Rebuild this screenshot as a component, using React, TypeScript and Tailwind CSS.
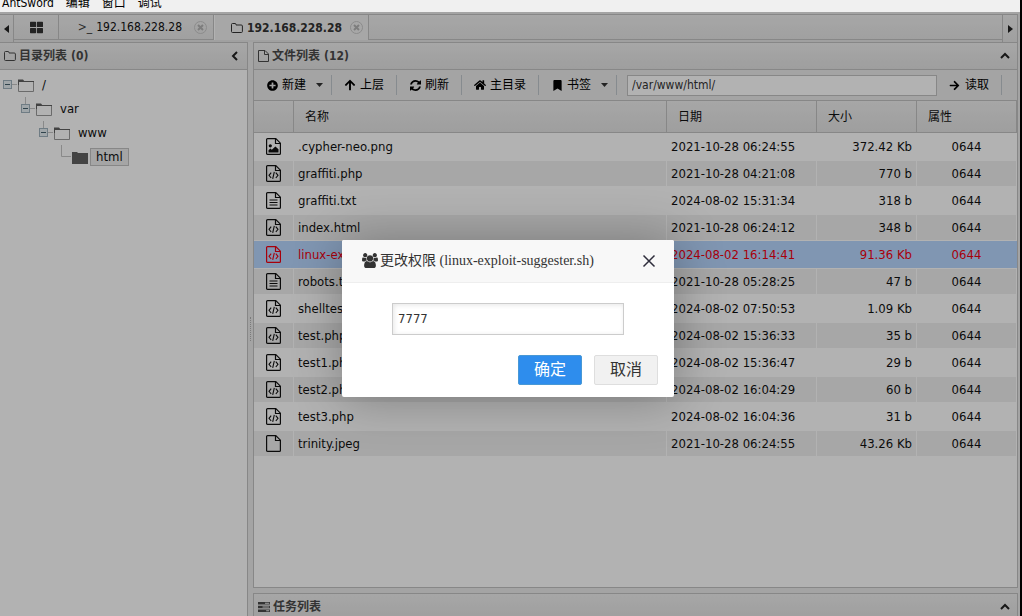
import React, { useState } from 'react';
import { FaArrowRight, FaArrowUp, FaBookmark, FaHome, FaPlusCircle, FaThLarge } from 'react-icons/fa';

type FileKind = 'image' | 'code' | 'text' | 'plain';

interface FileEntry {
  name: string;
  kind: FileKind;
  date: string;
  size: string;
  mode: string;
}

const files: FileEntry[] = [
  { name: '.cypher-neo.png', kind: 'image', date: '2021-10-28 06:24:55', size: '372.42 Kb', mode: '0644' },
  { name: 'graffiti.php', kind: 'code', date: '2021-10-28 04:21:08', size: '770 b', mode: '0644' },
  { name: 'graffiti.txt', kind: 'text', date: '2024-08-02 15:31:34', size: '318 b', mode: '0644' },
  { name: 'index.html', kind: 'code', date: '2021-10-28 06:24:12', size: '348 b', mode: '0644' },
  { name: 'linux-exploit-suggester.sh', kind: 'code', date: '2024-08-02 16:14:41', size: '91.36 Kb', mode: '0644' },
  { name: 'robots.txt', kind: 'text', date: '2021-10-28 05:28:25', size: '47 b', mode: '0644' },
  { name: 'shelltest.php', kind: 'code', date: '2024-08-02 07:50:53', size: '1.09 Kb', mode: '0644' },
  { name: 'test.php', kind: 'code', date: '2024-08-02 15:36:33', size: '35 b', mode: '0644' },
  { name: 'test1.php', kind: 'code', date: '2024-08-02 15:36:47', size: '29 b', mode: '0644' },
  { name: 'test2.php', kind: 'code', date: '2024-08-02 16:04:29', size: '60 b', mode: '0644' },
  { name: 'test3.php', kind: 'code', date: '2024-08-02 16:04:36', size: '31 b', mode: '0644' },
  { name: 'trinity.jpeg', kind: 'plain', date: '2021-10-28 06:24:55', size: '43.26 Kb', mode: '0644' },
];

const tree = [
  { name: '/', indent: 'pl-0' },
  { name: 'var', indent: 'pl-[18px]' },
  { name: 'www', indent: 'pl-[36px]' },
  { name: 'html', indent: 'pl-[54px]' },
];

const FileIcon: React.FC<{ kind: FileKind }> = ({ kind }) => (
  <svg width="15" height="17" viewBox="0 0 15 17" fill="none" stroke="currentColor" strokeWidth="1.2" className="mx-auto block">
    <path d="M1.6 .6H9.8L14.4 5.2V15.4Q14.4 16.4 13.4 16.4H1.6Q.6 16.4 .6 15.4V1.6Q.6 .6 1.6 .6Z" />
    <path d="M9.5 .9V5.5H14.1" />
    {kind === 'code' && <path d="M5.2 7.6L3 10.3L5.2 13M9.8 7.6L12 10.3L9.8 13M8.3 6.8L6.7 13.8" strokeWidth="1.1" />}
    {kind === 'text' && <path d="M3.5 8H11.5M3.5 10.5H11.5M3.5 13H11.5" strokeWidth="1.2" />}
    {kind === 'image' && (
      <g fill="currentColor" stroke="none">
        <circle cx="4.3" cy="7.8" r="1.6" />
        <path d="M2.5 14.5V12.3L4.4 10.6L5.8 11.8L9.4 8.4L12.5 11.3V14.5Z" />
      </g>
    )}
  </svg>
);

const UsersIcon: React.FC = () => (
  <svg width="16" height="15" viewBox="0 0 1920 1792" fill="currentColor" className="shrink-0">
    <path d="M593 896q-162 5-265 128H194q-82 0-138-40.5T0 865q0-353 124-353 6 0 43.5 21t97.5 42.5T384 597q67 0 133-23-5 37-5 66 0 139 81 256zm1071 637q0 120-73 189.5t-194 69.5H523q-121 0-194-69.5T256 1533q0-53 3.5-103.5t14-109T300 1212t43-97.5 62-81 85.5-53.5T602 960q10 0 43 21.5t73 48 107 48 135 21.5 135-21.5 107-48 73-48 43-21.5q61 0 111.5 20t85.5 53.5 62 81 43 97.5 26.5 108.5 14 109 3.5 103.5zM640 256q0 106-75 181t-181 75-181-75-75-181 75-181T384 0t181 75 75 181zm704 384q0 159-112.5 271.5T960 1024 688.5 911.5 576 640t112.5-271.5T960 256t271.5 112.5T1344 640zm576 225q0 78-56 118.5t-138 40.5h-134q-103-123-265-128 81-117 81-256 0-29-5-66 66 23 133 23 59 0 119-21.5t97.5-42.5 43.5-21q124 0 124 353zm-128-609q0 106-75 181t-181 75-181-75-75-181 75-181 181-75 181 75 75 181z" />
  </svg>
);

const RefreshIcon: React.FC = () => (
  <svg width="11" height="11" viewBox="0 0 1536 1536" fill="currentColor">
    <path d="M1511 928q0 5-1 7-64 268-268 434.5T764 1536q-146 0-282.5-55T238 1324l-129 129q-19 19-45 19t-45-19-19-45V960q0-26 19-45t45-19h448q26 0 45 19t19 45-19 45l-137 137q71 66 161 102t187 36q134 0 250-65t186-179q11-17 53-117 8-23 30-23h192q13 0 22.5 9.5t9.5 22.5zm25-800v448q0 26-19 45t-45 19h-448q-26 0-45-19t-19-45 19-45l138-138Q969 256 768 256q-134 0-250 65T332 500q-11 17-53 117-8 23-30 23H50q-13 0-22.5-9.5T18 608v-7q65-268 270-434.5T768 0q146 0 284 55.5T1297 212l130-129q19-19 45-19t45 19 19 45z" />
  </svg>
);

const TasksIcon: React.FC = () => (
  <svg width="12" height="10" viewBox="0 0 12 10" fill="currentColor" className="shrink-0">
    <path d="M0 0H12V2.6H0ZM0 3.7H12V6.3H0ZM0 7.4H12V10H0Z" />
    <path d="M7 .8H11.2V1.8H7ZM4.5 4.5H11.2V5.5H4.5ZM8.2 8.2H11.2V9.2H8.2Z" fill="#e9e9e9" />
  </svg>
);

const OutlineFolder: React.FC = () => (
  <svg width="12" height="10" viewBox="0 0 12 10" fill="none" stroke="currentColor" className="shrink-0">
    <path d="M.5 1.5Q.5 .5 1.5 .5H4Q5 .5 5 1.5V2H10.2Q11.4 2 11.4 3V8.5Q11.4 9.5 10.4 9.5H1.5Q.5 9.5 .5 8.5Z" />
  </svg>
);

const TreeFolder: React.FC<{ filled?: boolean }> = ({ filled }) => (
  <svg width="16" height="13" viewBox="0 0 16 13" className="shrink-0">
    {filled ? (
      <path d="M0 1H5L6 2H16V13H0Z" fill="#606060" />
    ) : (
      <>
        <path d="M.5 3V12.5H15.5V2.5H6" fill="#fff" stroke="#9a9a9a" />
        <path d="M0 .5H5L6.2 2H16V3H1V6H0Z" fill="#606060" />
      </>
    )}
  </svg>
);

const TreeToggle: React.FC<{ depth: number; leaf: boolean }> = ({ depth, leaf }) => (
  <svg width="18" height="24" viewBox="0 0 18 24" fill="none" className="shrink-0">
    {depth > 0 && <path d={leaf ? 'M7.5 0V11.5H17' : 'M7.5 0V8'} stroke="#c4c4c4" />}
    {!leaf && (
      <>
        <path d="M12 11.5H17" stroke="#c4c4c4" />
        <rect x="3.5" y="7.5" width="8" height="8" fill="#e6eef2" stroke="#9fb2bd" />
        <path d="M5 11.5H10" stroke="#45606e" />
      </>
    )}
  </svg>
);

const TabClose: React.FC = () => (
  <button type="button" aria-label="关闭标签" className="shrink-0">
    <svg width="13" height="13" viewBox="0 0 13 13" fill="none">
      <circle cx="6.5" cy="6.5" r="6" stroke="#c8c8c8" />
      <path d="M4 4L9 9M9 4L4 9" stroke="#b4b4b4" strokeWidth="2" />
    </svg>
  </button>
);

const Chevron: React.FC<{ d: string }> = ({ d }) => (
  <svg width="10" height="10" viewBox="0 0 10 10" fill="none" stroke="#222" strokeWidth="2" className="shrink-0">
    <path d={d} />
  </svg>
);

interface PanelHeaderProps {
  icon: React.ReactNode;
  title: string;
  count?: number;
  chevron: string;
}

const PanelHeader: React.FC<PanelHeaderProps> = ({ icon, title, count, chevron }) => (
  <div className="flex h-7 shrink-0 items-center border-y border-[#c2c2c2] bg-linear-to-b from-[#efefef] to-[#e3e3e3] pr-[7px] pl-1 text-xs font-bold text-[#4a4a4a]">
    {icon}
    <h2 className="ml-[3px] flex-1">
      {title}
      {count !== undefined && <span className="ml-1">({count})</span>}
    </h2>
    <button type="button" aria-label="折叠">
      <Chevron d={chevron} />
    </button>
  </div>
);

const ToolButton: React.FC<{ icon: React.ReactNode; label: string; menu?: boolean }> = ({ icon, label, menu }) => (
  <button
    type="button"
    className={`flex h-5 shrink-0 items-center gap-1 border-r border-[#c0c8cd] pl-3 text-xs text-black ${menu ? 'pr-2' : 'pr-3'}`}
  >
    <span className="flex w-3 justify-center">{icon}</span>
    {label}
    {menu && (
      <svg width="7" height="4" viewBox="0 0 7 4" className="ml-1.5">
        <path d="M0 0H7L3.5 4Z" fill="#333" />
      </svg>
    )}
  </button>
);

const UP = 'M1 7L5 3L9 7';
const LEFT = 'M7 1L3 5L7 9';
const headCell = 'border-r border-b border-[#c2c2c2] pl-[11px] text-left text-xs font-normal';

export default function App() {
  const [mode, setMode] = useState('7777');
  const [path, setPath] = useState('/var/www/html/');
  const selected = 'linux-exploit-suggester.sh';

  return (
    <div className="flex h-screen flex-col overflow-hidden bg-black pr-0.5 font-['DejaVu_Sans_Condensed','Noto_Sans_CJK_SC',sans-serif] text-[13px] text-[#111]">
      <nav className="flex h-3 shrink-0 items-end gap-3 overflow-hidden bg-[#f0f0f0] pl-0.5 text-xs leading-[18px] text-black">
        <span>AntSword</span>
        <span>编辑</span>
        <span>窗口</span>
        <span>调试</span>
      </nav>

      <div className="relative flex min-h-0 flex-1 flex-col bg-[#ebebeb] pt-0.5 pr-0.5">
        <div className="flex h-7 shrink-0 border-t border-r border-[#c2c2c2] bg-linear-to-b from-[#efefef] to-[#e5e5e5]">
          <button type="button" aria-label="向左" className="flex w-3.5 shrink-0 items-center justify-center border-r border-[#c2c2c2]">
            <svg width="5" height="8" viewBox="0 0 5 8">
              <path d="M5 0V8L0 4Z" fill="#222" />
            </svg>
          </button>
          <div className="flex h-[25px] min-w-0 flex-1">
            <button type="button" aria-label="主页" className="flex w-[45px] shrink-0 items-center justify-center border-r border-b border-[#c2c2c2]">
              <FaThLarge size={13} className="text-[#333]" />
            </button>
            <div className="flex w-[155px] shrink-0 items-center justify-end border-r border-b border-[#c2c2c2] pr-1.5 text-xs">
              <span className="text-[#444]">&gt;_</span>
              <span className="mr-3 ml-1">192.168.228.28</span>
              <TabClose />
            </div>
            <div className="flex w-[155px] shrink-0 items-center justify-end border-r border-l border-r-[#c2c2c2] border-l-white bg-[#f0f0f0] pr-[5px] text-xs font-bold text-[#333]">
              <OutlineFolder />
              <span className="mr-2 ml-1">192.168.228.28</span>
              <TabClose />
            </div>
            <div className="flex-1 border-b border-[#c2c2c2]" />
          </div>
          <button type="button" aria-label="向右" className="flex w-[15px] shrink-0 items-center justify-center border-l border-[#c2c2c2]">
            <svg width="5" height="8" viewBox="0 0 5 8">
              <path d="M0 0V8L5 4Z" fill="#222" />
            </svg>
          </button>
        </div>

        <div className="flex min-h-0 flex-1">
          <aside className="flex w-[248px] shrink-0 flex-col border-r border-[#c2c2c2] bg-white">
            <PanelHeader icon={<OutlineFolder />} title="目录列表" count={0} chevron={LEFT} />
            <ul className="pt-[3px]">
              {tree.map((node, depth) => {
                const leaf = depth === tree.length - 1;
                return (
                  <li key={node.name} className={`flex h-6 items-center ${node.indent}`}>
                    <TreeToggle depth={depth} leaf={leaf} />
                    <TreeFolder filled={leaf} />
                    <span className={`ml-0.5 border px-[5px] leading-4 ${leaf ? 'border-[#c2c2c2] bg-[#ececec]' : 'border-transparent'}`}>
                      {node.name}
                    </span>
                  </li>
                );
              })}
            </ul>
          </aside>

          <div className="flex w-[5px] shrink-0 items-center justify-center">
            <div className="h-6 border-l border-dotted border-[#b0b0b0]" />
          </div>

          <main className="flex min-w-0 flex-1 flex-col">
            <section className="flex min-h-0 flex-1 flex-col border-r border-b border-l border-[#c2c2c2] bg-white">
              <PanelHeader
                icon={
                  <svg width="11" height="12" viewBox="0 0 11 12" fill="none" stroke="currentColor" className="shrink-0">
                    <path d="M.5 .5H7L10.5 4V11.5H.5ZM6.5 .5V4.5H10.5" />
                  </svg>
                }
                title="文件列表"
                count={12}
                chevron={UP}
              />
              <div className="flex h-[31px] shrink-0 items-center border-b border-[#c2c2c2] bg-[#ebebeb] pr-[15px]">
                <ToolButton icon={<FaPlusCircle size={11} />} label="新建" menu />
                <ToolButton icon={<FaArrowUp size={12} />} label="上层" />
                <ToolButton icon={<RefreshIcon />} label="刷新" />
                <ToolButton icon={<FaHome size={12} />} label="主目录" />
                <ToolButton icon={<FaBookmark size={11} />} label="书签" menu />
                <input
                  aria-label="路径"
                  value={path}
                  onChange={(e) => setPath(e.target.value)}
                  className="ml-2.5 h-[21px] min-w-0 flex-1 border border-[#c2c2c2] bg-white px-1 text-xs text-[#333] outline-none"
                />
                <ToolButton icon={<FaArrowRight size={11} />} label="读取" />
              </div>

              <table className="w-full table-fixed border-separate border-spacing-0">
                <thead>
                  <tr className="h-8 bg-linear-to-b from-[#efefef] to-[#e3e3e3]">
                    <th className={`w-10 ${headCell}`} />
                    <th className={headCell}>名称</th>
                    <th className={`w-[150px] ${headCell}`}>日期</th>
                    <th className={`w-[100px] ${headCell}`}>大小</th>
                    <th className={`w-[100px] ${headCell}`}>属性</th>
                  </tr>
                </thead>
                <tbody>
                  {files.map((file, index) => {
                    const active = file.name === selected;
                    const cell = `h-[27px] border-y border-r py-0 leading-5 ${active ? 'border-[#b8d7ff]' : 'border-white'}`;
                    const rowColor = active ? 'bg-[#b8d7ff] text-[#f00010]' : index % 2 ? 'bg-[#f0f0f0]' : 'bg-white';
                    return (
                      <tr key={file.name} className={rowColor}>
                        <td className={cell}>
                          <FileIcon kind={file.kind} />
                        </td>
                        <td className={`truncate pl-1 ${cell}`}>{file.name}</td>
                        <td className={`pl-1 whitespace-nowrap ${cell}`}>{file.date}</td>
                        <td className={`pr-1 text-right ${cell}`}>{file.size}</td>
                        <td className={`text-center ${cell}`}>{file.mode}</td>
                      </tr>
                    );
                  })}
                </tbody>
              </table>
            </section>

            <section className="mt-[5px] h-[23px] shrink-0 overflow-hidden border-x border-[#c2c2c2]">
              <PanelHeader icon={<TasksIcon />} title="任务列表" chevron={UP} />
            </section>
          </main>
        </div>

        {/* modal layer */}
        <div className="absolute inset-0 flex items-center justify-center bg-black/30 pt-2 pr-1">
          <form
            role="dialog"
            aria-labelledby="mode-title"
            onSubmit={(e) => e.preventDefault()}
            className="w-[332px] rounded-xs bg-white shadow-[1px_1px_50px_rgba(0,0,0,0.3)]"
          >
            <div className="flex h-[43px] items-center rounded-t-xs border-b border-[#eee] bg-[#f8f8f8] pr-[18px] pl-5 text-[#333]">
              <UsersIcon />
              <h3 id="mode-title" className="ml-0.5 flex-1 font-['Liberation_Serif','Noto_Sans_CJK_SC',serif] text-sm whitespace-nowrap">
                更改权限 ({selected})
              </h3>
              <button type="button" aria-label="关闭">
                <svg width="14" height="14" viewBox="0 0 14 14" stroke="#2e2d3c" strokeWidth="1.5">
                  <path d="M1.5 1.5L12.5 12.5M12.5 1.5L1.5 12.5" />
                </svg>
              </button>
            </div>
            <div className="px-[50px] py-5">
              <input
                aria-label="权限"
                value={mode}
                onChange={(e) => setMode(e.target.value)}
                className="block h-8 w-full border border-[#ccc] bg-white px-[5px] text-[13px] text-[#333] shadow-[inset_1px_1px_5px_rgba(0,0,0,0.1)] outline-none"
              />
            </div>
            <div className="flex justify-end gap-3 px-4 pb-3 text-base">
              <button type="submit" className="h-[30px] w-16 rounded-xs border border-[#4898d5] bg-[#2e8ded] leading-7 text-white">
                确定
              </button>
              <button type="button" className="h-[30px] w-16 rounded-xs border border-[#dedede] bg-[#f1f1f1] leading-7 text-[#333]">
                取消
              </button>
            </div>
          </form>
        </div>
      </div>
    </div>
  );
}
